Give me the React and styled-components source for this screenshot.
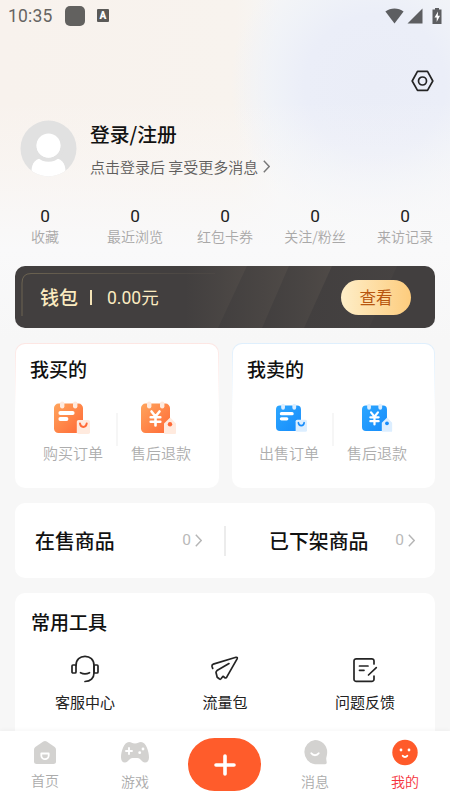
import React from 'react';
import styled, { createGlobalStyle, css } from 'styled-components';

const GlobalStyle = createGlobalStyle`
  * {
    box-sizing: border-box;
  }

  body {
    margin: 0;
    background: #f7f7f7;
    font-family: 'Noto Sans CJK SC', 'Noto Sans', sans-serif;
    color: #111;
  }

  svg {
    display: block;
    flex-shrink: 0;
  }
`;

const Page = styled.div`
  display: flex;
  flex-direction: column;
  width: 450px;
  height: 800px;
  overflow: hidden;
  background:
    linear-gradient(180deg, rgba(250, 249, 249, 0) 0, rgba(250, 249, 249, 0) 100px, rgba(250, 249, 249, 0.35) 165px, #f9f9fa 250px, #f7f7f7 340px),
    radial-gradient(circle at 375px 85px, #eaedf7 0, #ebeef8 70px, rgba(239, 242, 248, 0.85) 105px, rgba(246, 246, 247, 0) 145px),
    linear-gradient(90deg, #f8f2ed 0, #f8f3ee 235px, #f6f6f6 280px, #f5f6f8 450px);
`;

const StatusBar = styled.div`
  display: flex;
  align-items: center;
  height: 31px;
  padding: 0 8px;
  flex-shrink: 0;
`;

const Clock = styled.span`
  width: 57px;
  font-family: Roboto, sans-serif;
  font-size: 17.5px;
  letter-spacing: 0.2px;
  color: #666462;
`;

const AppDot = styled.span`
  width: 20px;
  height: 20px;
  margin-right: 12px;
  border-radius: 5px;
  background: #62615f;
`;

const KeyboardBadge = styled.span`
  width: 12px;
  height: 13px;
  border-radius: 1px;
  background: #5b5a58;
  color: #fff;
  font: 900 10px/13px Roboto, sans-serif;
  text-align: center;
`;

const Signals = styled.div`
  display: flex;
  align-items: center;
  gap: 3px;
  margin-left: auto;
`;

const Battery = styled.svg`
  margin-left: 6px;
`;

const SettingsRow = styled.div`
  display: flex;
  justify-content: flex-end;
  height: 89px;
  padding: 39px 16px 0 0;
  flex-shrink: 0;
`;

const Profile = styled.div`
  display: flex;
  height: 85px;
  padding-left: 20px;
  flex-shrink: 0;
`;

const ProfileText = styled.div`
  margin-left: 13px;
`;

const LoginTitle = styled.div`
  height: 28px;
  font-size: 19.8px;
  font-weight: 500;
  line-height: 27px;
`;

const LoginHint = styled.div`
  display: flex;
  align-items: center;
  gap: 5px;
  margin-top: 8px;
  font-size: 15px;
  font-weight: 350;
  line-height: 21px;
  color: #605e5d;
`;

const Stats = styled.div`
  display: grid;
  grid-template-columns: repeat(5, 90px);
  height: 61px;
  flex-shrink: 0;
  text-align: center;
`;

const StatValue = styled.div`
  font-family: Roboto, sans-serif;
  font-size: 17.3px;
  line-height: 22px;
  color: #222;
`;

const StatLabel = styled.div`
  font-size: 14px;
  font-weight: 350;
  line-height: 18px;
  color: #a9a8a8;
`;

const Wallet = styled.div`
  position: relative;
  display: flex;
  align-items: center;
  height: 62px;
  margin: 0 15px;
  padding: 0 24px 0 25px;
  border-radius: 10px;
  flex-shrink: 0;
  overflow: hidden;
  background: #423f3f;
  color: #fbebc0;
`;

const WalletShine = styled.svg`
  position: absolute;
  inset: 0;
`;

const WalletTitle = styled.span`
  position: relative;
  font-size: 19px;
  font-weight: 500;
  line-height: 26px;
`;

const WalletBar = styled.span`
  position: relative;
  width: 2px;
  height: 15px;
  margin: 0 15px 0 12px;
  background: #f3e2b6;
`;

const WalletAmount = styled.span`
  position: relative;
  margin-top: 2px;
  font-family: Roboto, 'Noto Sans CJK SC', sans-serif;
  font-size: 17.5px;
  line-height: 26px;
`;

const ViewButton = styled.button`
  position: relative;
  width: 70px;
  height: 35px;
  margin-left: auto;
  padding: 0;
  border: 0;
  border-radius: 18px;
  background: linear-gradient(90deg, #feeec8, #fdcc7d);
  color: #b8560f;
  font: 400 16.5px/34px 'Noto Sans CJK SC', sans-serif;
`;

const TradeRow = styled.div`
  display: flex;
  justify-content: space-between;
  margin: 15px 15px 0;
  flex-shrink: 0;
`;

const TradeCard = styled.section`
  width: ${props => props.$width}px;
  height: 145px;
  padding-top: 12px;
  border: 1px solid transparent;
  border-radius: 10px;
  background:
    linear-gradient(#fff, #fff) padding-box,
    linear-gradient(180deg, ${props => props.$edge}, #fff 45%) border-box;
`;

const CardTitle = styled.h2`
  margin: 0 0 0 14px;
  font-size: 19px;
  font-weight: 500;
  line-height: 26px;
`;

const TradeItems = styled.div`
  display: flex;
  margin: 19px 0 0 ${props => props.$indent}px;
`;

const TradeItem = styled.div`
  display: flex;
  flex-direction: column;
  align-items: center;
  width: 86px;
  font-size: 15px;
  font-weight: 350;
  line-height: 22px;
  color: #adadad;

  svg {
    margin: 0 0 7px ${props => props.$shift || 0}px;
  }
`;

const Divider = styled.span`
  width: 2px;
  height: ${props => props.$height}px;
  background: #ececec;
`;

const TradeDivider = styled(Divider)`
  margin-top: 12px;
  background: #f6f6f6;
`;

const GoodsCard = styled.section`
  display: flex;
  align-items: center;
  height: 75px;
  margin: 15px 15px 0;
  border-radius: 10px;
  background: #fff;
  flex-shrink: 0;
`;

const GoodsLink = styled.div`
  display: flex;
  align-items: center;
  width: 209px;
  padding: ${props => props.$padding};
`;

const GoodsName = styled.span`
  font-size: 19.9px;
  font-weight: 500;
`;

const GoodsCount = styled.span`
  display: flex;
  align-items: center;
  gap: 4px;
  margin: -1px 0 0 auto;
  font-family: Roboto, sans-serif;
  font-size: 15.5px;
  color: #b9b9b9;
`;

const ToolsCard = styled.section`
  flex: 1;
  margin: 15px 15px 0;
  padding-top: 16px;
  border-radius: 10px 10px 0 0;
  background: #fff;
`;

const ToolsTitle = styled(CardTitle)`
  margin-left: 16px;
`;

const ToolsGrid = styled.div`
  display: grid;
  grid-template-columns: repeat(3, 1fr);
  margin-top: 19px;
`;

const Tool = styled.div`
  display: flex;
  flex-direction: column;
  align-items: center;
  gap: 7px;
  font-size: 15px;
  line-height: 22px;
  color: #222;
`;

const TabBar = styled.nav`
  display: grid;
  grid-template-columns: repeat(5, 90px);
  height: 69px;
  flex-shrink: 0;
  background: #fff;
  box-shadow: 0 -1px 4px rgba(0, 0, 0, 0.04);
`;

const Tab = styled.div`
  display: flex;
  flex-direction: column;
  align-items: center;
  gap: ${props => (props.$home ? 4 : 5)}px;
  padding-top: 7px;
  font-size: 14px;
  font-weight: 350;
  line-height: 20px;
  color: ${props => (props.$active ? '#f5333c' : '#ababab')};
`;

const PublishButton = styled.div`
  display: flex;
  align-items: center;
  justify-content: center;
  width: 73px;
  height: 53px;
  margin-right: 1px;
  border-radius: 27px;
  background: #ff5c2b;
`;

const strokeProps = css`
  fill: none;
  stroke: #242424;
  stroke-width: 1.7;
  stroke-linecap: round;
  stroke-linejoin: round;
`;

const LineIcon = styled.svg`
  ${strokeProps}
`;

const Chevron = ({ color = '#777' }) => (
  <svg width="7" height="13" viewBox="0 0 7 13" fill="none" stroke={color} strokeWidth="1.4">
    <path d="M0.8 0.8 6.2 6.5 0.8 12.2" />
  </svg>
);

const palettes = {
  orange: { from: '#ffa45c', to: '#ff6936', light: '#ffeade' },
  blue: { from: '#2ca6ff', to: '#168cfb', light: '#dceeff' },
};

const TradeIcon = ({ tone, kind, size }) => {
  const { from, to, light } = palettes[tone];
  const id = `${tone}-${kind}`;
  return (
    <svg width={size} height="34" viewBox="0 0 36 34">
      <defs>
        <linearGradient id={id} x1="0" y1="0" x2="1" y2="1">
          <stop offset="0" stopColor={from} />
          <stop offset="1" stopColor={to} />
        </linearGradient>
      </defs>
      <rect x="0" y="2.6" width="29" height="29.4" rx="4.5" fill={`url(#${id})`} />
      <rect x="6" y="0.4" width="4.4" height="7" rx="2.2" fill={light} />
      <rect x="19" y="0.4" width="4.4" height="7" rx="2.2" fill={light} />
      {kind === 'order' ? (
        <>
          <path d="M6.3 12h12.4M6.3 18h6.2" stroke="#fff" strokeWidth="3.8" strokeLinecap="round" />
          <rect x="22.8" y="19" width="13.2" height="14" rx="1.8" fill={light} />
          <path d="M26 22.5c.5 4.5 6.2 4.5 6.7 0" fill="none" stroke={to} strokeWidth="2" strokeLinecap="round" />
        </>
      ) : (
        <>
          <path d="M10.5 10.5 14.5 15.5 18.5 10.5M9.7 16.2h9.6M9.7 20.7h9.6M14.5 15.5v9" fill="none" stroke="#fff" strokeWidth="2.6" strokeLinecap="round" />
          <path d="M23 22.5 29.2 16.5 35 22.5V32a1 1 0 0 1-1 1H24a1 1 0 0 1-1-1Z" fill={light} />
          <circle cx="29" cy="23.2" r="2.2" fill={to} />
        </>
      )}
    </svg>
  );
};

const stats = ['收藏', '最近浏览', '红包卡券', '关注/粉丝', '来访记录'];

const App = () => {
  return (
    <>
      <GlobalStyle />
      <Page>
        <StatusBar>
          <Clock>10:35</Clock>
          <AppDot />
          <KeyboardBadge>A</KeyboardBadge>
          <Signals>
            <svg width="19" height="16" viewBox="0 0 19 16" fill="#5d5e61">
              <path d="M0.4 3.6C5.5-.6 13.5-.6 18.6 3.6L9.5 15.5Z" />
            </svg>
            <svg width="16" height="16" viewBox="0 0 16 16" fill="#5d5e61">
              <path d="M15.5 0.5V15.5H0.5Z" />
            </svg>
            <Battery width="10" height="18" viewBox="0 0 10 18">
              <path d="M0.5 2.5h2.5V1h4v1.5h2.5V17h-9Z" fill="#5d5e61" />
              <path d="M6 4.5 2.5 10.5H4.7V15L8 8.7H5.8Z" fill="#fff" />
            </Battery>
          </Signals>
        </StatusBar>

        <SettingsRow>
          <LineIcon width="23" height="22" viewBox="0 0 23 22">
            <path d="M6.5 1.3h10L21.8 11l-5.3 9.3h-10L1.2 11Z" />
            <circle cx="11.5" cy="11" r="4" />
          </LineIcon>
        </SettingsRow>

        <Profile>
          <svg width="57" height="57" viewBox="0 0 57 57">
            <defs>
              <clipPath id="avatar">
                <circle cx="28.5" cy="28.5" r="28" />
              </clipPath>
            </defs>
            <g clipPath="url(#avatar)">
              <rect width="57" height="57" fill="#e1e1e1" />
              <path d="M11.5 57V51c0-8 5-13 11-13h12c6 0 11 5 11 13v6Z" fill="#fff" />
              <circle cx="28.5" cy="26" r="13.8" fill="#fff" stroke="#e1e1e1" strokeWidth="4" />
              <circle cx="28.5" cy="25.5" r="12" fill="#fff" />
            </g>
          </svg>
          <ProfileText>
            <LoginTitle>登录/注册</LoginTitle>
            <LoginHint>
              点击登录后 享受更多消息
              <Chevron />
            </LoginHint>
          </ProfileText>
        </Profile>

        <Stats>
          {stats.map(label => (
            <div key={label}>
              <StatValue>0</StatValue>
              <StatLabel>{label}</StatLabel>
            </div>
          ))}
        </Stats>

        <Wallet>
          <WalletShine width="420" height="62" viewBox="0 0 420 62">
            <defs>
              <linearGradient id="shine">
                <stop offset="0" stopColor="#4c4845" stopOpacity="0" />
                <stop offset="1" stopColor="#4f4a47" />
              </linearGradient>
              <linearGradient id="rim">
                <stop offset="0" stopColor="#6c6351" />
                <stop offset="1" stopColor="#57514a" stopOpacity="0.3" />
              </linearGradient>
            </defs>
            <path d="M170 0h62l-29 62h-33Z" fill="url(#shine)" />
            <path d="M232 0h42l-27 62h-44Z" fill="url(#shine)" />
            <path d="M274 0h43l-28 62h-42Z" fill="url(#shine)" />
            <path d="M317 0h65l-28 62h-65Z" fill="url(#shine)" opacity="0.35" />
            <path d="M7 50V17Q7 7.5 16 7.5H200" fill="none" stroke="url(#rim)" />
          </WalletShine>
          <WalletTitle>钱包</WalletTitle>
          <WalletBar />
          <WalletAmount>0.00元</WalletAmount>
          <ViewButton>查看</ViewButton>
        </Wallet>

        <TradeRow>
          <TradeCard $width={204} $edge="#fde6e3">
            <CardTitle>我买的</CardTitle>
            <TradeItems $indent={14}>
              <TradeItem $shift={-3}>
                <TradeIcon tone="orange" kind="order" size={36} />
                购买订单
              </TradeItem>
              <TradeDivider $height={33} />
              <TradeItem $shift={-5}>
                <TradeIcon tone="orange" kind="refund" size={36} />
                售后退款
              </TradeItem>
            </TradeItems>
          </TradeCard>
          <TradeCard $width={203} $edge="#deeffd">
            <CardTitle>我卖的</CardTitle>
            <TradeItems $indent={13}>
              <TradeItem $shift={4}>
                <TradeIcon tone="blue" kind="order" size={31} />
                出售订单
              </TradeItem>
              <TradeDivider $height={33} />
              <TradeItem>
                <TradeIcon tone="blue" kind="refund" size={31} />
                售后退款
              </TradeItem>
            </TradeItems>
          </TradeCard>
        </TradeRow>

        <GoodsCard>
          <GoodsLink $padding="0 22px 0 20px">
            <GoodsName>在售商品</GoodsName>
            <GoodsCount>
              0<Chevron color="#b5b5b5" />
            </GoodsCount>
          </GoodsLink>
          <Divider $height={30} />
          <GoodsLink $padding="0 20px 0 43px">
            <GoodsName>已下架商品</GoodsName>
            <GoodsCount>
              0<Chevron color="#b5b5b5" />
            </GoodsCount>
          </GoodsLink>
        </GoodsCard>

        <ToolsCard>
          <ToolsTitle>常用工具</ToolsTitle>
          <ToolsGrid>
            <Tool>
              <LineIcon width="28" height="30" viewBox="0 0 28 30">
                <path d="M5 11.5C5 5.5 9 2.3 14 2.3s9 3.2 9 9.2v7.5c0 5-3.5 8.5-9 8.5" />
                <rect x="1" y="11" width="4" height="8" rx="1" />
                <rect x="23" y="11" width="4" height="8" rx="1" />
                <path d="M9.5 18.7c2.5 1.3 6.5 1.3 9 0" />
              </LineIcon>
              客服中心
            </Tool>
            <Tool>
              <LineIcon width="30" height="30" viewBox="0 0 30 30">
                <path d="M2.7 14.5 2 12.2Q1.7 10.6 3.3 10.1L26 3.3q1.9-.3 1.1 1.5L16.7 23.2q-.9 1.4-2.1.3L13 22.3l-2 2.5q-.9 1-1.8 0L7.2 23.3 6 18.5Q6 17.5 7 16.6L19 9.6" />
              </LineIcon>
              流量包
            </Tool>
            <Tool>
              <LineIcon width="26" height="30" viewBox="0 0 26 30">
                <path d="M22 10V7a2.2 2.2 0 0 0-2.2-2.2H4.2A2.2 2.2 0 0 0 2 7v18.2a2.2 2.2 0 0 0 2.2 2.2h15.6a2.2 2.2 0 0 0 2.2-2.2V22M7.5 12h8.5M7.5 16.3h4.5M16.5 21l7.8-7.3" />
              </LineIcon>
              问题反馈
            </Tool>
          </ToolsGrid>
        </ToolsCard>

        <TabBar>
          <Tab $home>
            <svg width="24" height="28" viewBox="0 0 24 28">
              <path d="M10.3 3.5q1.7-1 3.4 0l8 5.500q1.300 1 1.300 2.600V23.500q0 2.500-2.500 2.500h-17Q1 26 1 23.500V11.600Q1 10 2.300 9Z" fill="#d3d2d0" />
              <path d="M8.3 15.5h7.4v2a3.7 3.7 0 0 1-7.4 0Z" fill="none" stroke="#fff" strokeWidth="1.8" strokeLinejoin="round" />
            </svg>
            首页
          </Tab>
          <Tab>
            <svg width="28" height="28" viewBox="0 0 28 28">
              <path d="M8 4c2.500 0 3 1.500 6 1.500S17.500 4 20 4c5 0 8 9.500 8 15.500 0 3-1.500 5-4 5-3.500 0-4-4.500-7.500-4.500h-5C8 20 7.500 24.500 4 24.500c-2.500 0-4-2-4-5C0 13.500 3 4 8 4Z" fill="#d3d2d0" />
              <path d="M8 10v6M5 13h6" stroke="#fff" strokeWidth="1.9" strokeLinecap="round" />
              <circle cx="22" cy="11" r="1.4" fill="#fff" />
              <circle cx="18.7" cy="14.7" r="1.4" fill="#fff" />
            </svg>
            游戏
          </Tab>
          <Tab>
            <PublishButton>
              <svg width="22" height="22" viewBox="0 0 22 22" stroke="#fff" strokeWidth="3.6" strokeLinecap="round">
                <path d="M11 2v18M2 11h18" />
              </svg>
            </PublishButton>
          </Tab>
          <Tab>
            <svg width="26" height="28" viewBox="0 0 26 28">
              <path d="M13 2a12.200 12.200 0 0 1 12.200 12.200c0 3-1 4.800-1 6.500l.5 3.800q.2 1.700-1.500 1.700H13A12.200 12.200 0 0 1 13 2Z" fill="#d3d2d0" />
              <path d="M9.3 15.3c1.7 2.5 5.7 2.5 7.4 0" fill="none" stroke="#fff" strokeWidth="1.9" strokeLinecap="round" />
            </svg>
            消息
          </Tab>
          <Tab $active>
            <svg width="26" height="28" viewBox="0 0 26 28">
              <circle cx="13" cy="14.5" r="12.7" fill="#ff5a2a" />
              <circle cx="9" cy="12" r="1.4" fill="#fff" />
              <circle cx="17" cy="12" r="1.4" fill="#fff" />
              <path d="M10.7 17.7c1 1.7 3.6 1.7 4.6 0" fill="none" stroke="#fff" strokeWidth="1.9" strokeLinecap="round" />
            </svg>
            我的
          </Tab>
        </TabBar>
      </Page>
    </>
  );
};

export default App;
